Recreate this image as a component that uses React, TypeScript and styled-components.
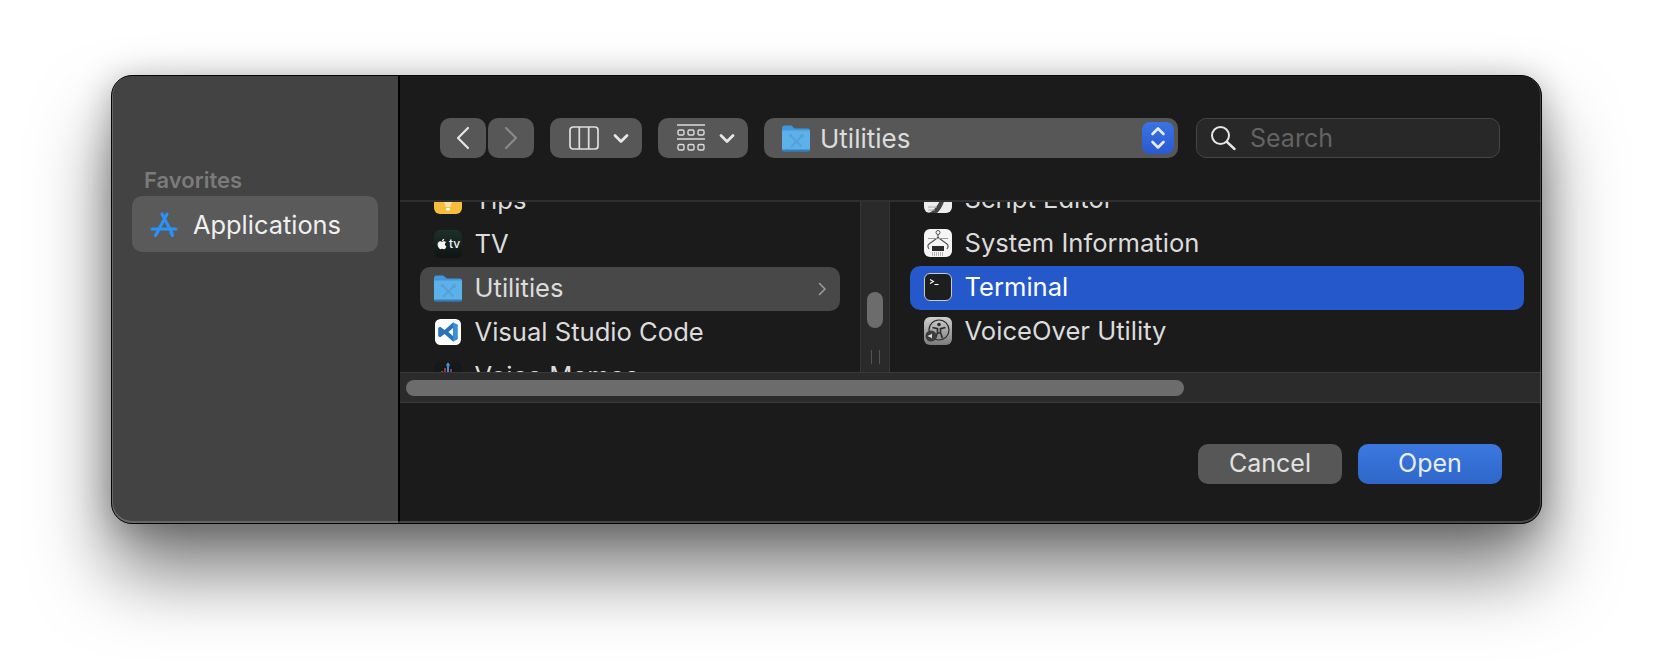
import React from 'react';
import styled, { createGlobalStyle } from 'styled-components';
import { FaApple } from 'react-icons/fa';

const Global = createGlobalStyle`
  html, body { margin: 0; padding: 0; background: #fff; }
  body { font-family: Inter, "Noto Sans", "Liberation Sans", sans-serif; -webkit-font-smoothing: antialiased; }
`;

const Page = styled.div`
  width: 1654px;
  height: 672px;
  overflow: hidden;
  box-sizing: border-box;
  padding: 75px 0 0 111px;
  background: #fff;
`;

const Dialog = styled.div`
  width: 1431px;
  height: 449px;
  box-sizing: border-box;
  border: 1px solid #050505;
  border-radius: 21px;
  display: flex;
  overflow: hidden;
  background: #1b1b1b;
  box-shadow: 0 48px 76px rgba(0, 0, 0, 0.52), 0 4px 34px rgba(0, 0, 0, 0.27);
  position: relative;
  &::after {
    content: '';
    position: absolute;
    inset: 0;
    border-radius: 20px;
    box-shadow: inset 0 -1px 0 1px rgba(255, 255, 255, 0.2);
    pointer-events: none;
  }
`;

const Sidebar = styled.aside`
  width: 286px;
  flex: none;
  box-sizing: border-box;
  background: #434343;
  padding: 91px 20px 0 20px;
`;

const SidebarTitle = styled.div`
  font-size: 22px;
  font-weight: 600;
  line-height: 26px;
  color: #7b7b7b;
  padding-left: 12px;
  margin-bottom: 3px;
`;

const SidebarItem = styled.div`
  height: 56px;
  border-radius: 10px;
  background: #5a5a5a;
  display: flex;
  align-items: center;
  gap: 15px;
  padding-left: 18px;
  font-size: 25.4px;
  color: #f0f0f0;
`;

const Main = styled.main`
  flex: 1;
  min-width: 0;
  display: flex;
  flex-direction: column;
  border-left: 2px solid #000;
`;

const Toolbar = styled.div`
  height: 126px;
  flex: none;
  box-sizing: border-box;
  display: flex;
  align-items: flex-start;
  padding: 42px 40px 0 40px;
  border-bottom: 2px solid #2f2f2f;
`;

const NavPair = styled.div`
  display: flex;
  gap: 2px;
  margin-right: 16px;
`;

const ToolButton = styled.div<{ $w: number }>`
  width: ${(p) => p.$w}px;
  height: 40px;
  flex: none;
  box-sizing: border-box;
  border-radius: 10px;
  background: #575757;
  display: flex;
  align-items: center;
  justify-content: center;
`;

const ViewButton = styled(ToolButton)`
  justify-content: flex-start;
  padding-left: 19px;
  margin-right: 16px;
  gap: 14px;
`;

const PathPopup = styled(ToolButton)`
  justify-content: flex-start;
  padding-left: 18px;
  gap: 10px;
  font-size: 26px;
  color: #dcdcdc;
  margin-right: 18px;
  position: relative;
`;

const Stepper = styled.div`
  position: absolute;
  right: 4px;
  top: 4px;
  width: 32px;
  height: 32px;
  border-radius: 8px;
  background: linear-gradient(#3a73e4, #2a5ad0);
  display: flex;
  align-items: center;
  justify-content: center;
`;

const SearchField = styled.div`
  width: 304px;
  height: 40px;
  box-sizing: border-box;
  border-radius: 10px;
  background: #282828;
  border: 1px solid #454545;
  display: flex;
  align-items: center;
  padding-left: 13px;
  gap: 14px;
  font-size: 25px;
  color: #636363;
`;

const Browser = styled.div`
  height: 170px;
  flex: none;
  display: flex;
  overflow: hidden;
`;

const Column = styled.div<{ $w: number; $padRight: number }>`
  ${(p) => (p.$w ? `width: ${p.$w}px; flex: none;` : 'flex: 1;')}
  box-sizing: border-box;
  padding: 0 ${(p) => p.$padRight}px 0 20px;
  overflow: hidden;
`;

const RowList = styled.div<{ $top: number }>`
  margin-top: ${(p) => p.$top}px;
`;

const Row = styled.div<{ $state?: 'dim' | 'active' }>`
  height: 44px;
  box-sizing: border-box;
  padding: 0 0 3px 14px;
  border-radius: 10px;
  display: flex;
  align-items: center;
  gap: 12.5px;
  font-size: 25.6px;
  color: ${(p) => (p.$state === 'active' ? '#fff' : '#dcdcdc')};
  background: ${(p) => (p.$state === 'active' ? '#2559cb' : p.$state === 'dim' ? '#484848' : 'transparent')};
  position: relative;
`;

const RowChevron = styled.svg`
  position: absolute;
  right: 13px;
  top: 15px;
`;

const Resizer = styled.div`
  width: 30px;
  flex: none;
  box-sizing: border-box;
  background: #2a2a2a;
  border-left: 1px solid #363636;
  border-right: 1px solid #363636;
  display: flex;
  flex-direction: column;
  align-items: center;
  padding-top: 90px;
`;

const ResizerThumb = styled.div`
  width: 16px;
  height: 36px;
  border-radius: 8px;
  background: #6c6c6c;
`;

const Grip = styled.div`
  width: 9px;
  height: 14px;
  margin-top: 22px;
  box-sizing: border-box;
  border-left: 1px solid #555;
  border-right: 1px solid #555;
`;

const HScroll = styled.div`
  height: 31px;
  flex: none;
  box-sizing: border-box;
  background: #2b2b2b;
  border-top: 1px solid #3a3a3a;
  border-bottom: 1px solid #3a3a3a;
  padding: 7px 6px;
`;

const HThumb = styled.div`
  width: 778px;
  height: 16px;
  border-radius: 8px;
  background: #6c6c6c;
`;

const Footer = styled.div`
  flex: 1;
  display: flex;
  justify-content: flex-end;
  gap: 16px;
  padding: 41px 39px 0 0;
`;

const DialogButton = styled.div<{ $primary?: boolean }>`
  width: 144px;
  height: 40px;
  box-sizing: border-box;
  padding-bottom: 2px;
  border-radius: 10px;
  display: flex;
  align-items: center;
  justify-content: center;
  font-size: 25px;
  color: ${(p) => (p.$primary ? '#e8eefb' : '#e2e2e2')};
  background: ${(p) => (p.$primary ? 'linear-gradient(#3b78e0, #2f66c9)' : '#575757')};
`;

const AppIcon = styled.svg`
  width: 28px;
  height: 28px;
  flex: none;
  display: block;
`;

const TvBadge = styled.div`
  width: 28px;
  height: 28px;
  flex: none;
  box-sizing: border-box;
  border-radius: 6px;
  background: linear-gradient(#1d3029, #0f1414);
  color: #f4f4f4;
  display: flex;
  align-items: center;
  justify-content: center;
  gap: 1px;
  font-size: 12px;
  font-weight: 500;
`;

const AppStoreGlyph = () => (
  <svg width="28" height="25" viewBox="0 0 28 25" fill="none" stroke="#2a93fb" strokeWidth="3" strokeLinecap="round">
    <path d="M12 2l10 19M17 2L7 21M2 17h24" />
    <path d="M5.5 23.5l1.5-2.5M22.5 23.5L21 21" />
  </svg>
);

const ChevronLeft = () => (
  <svg width="14" height="24" viewBox="0 0 14 24" fill="none" stroke="#e6e6e6" strokeWidth="2.2" strokeLinecap="round" strokeLinejoin="round">
    <path d="M12 2L2 12l10 10" />
  </svg>
);

const ChevronRight = () => (
  <svg width="14" height="24" viewBox="0 0 14 24" fill="none" stroke="#8a8a8a" strokeWidth="2.2" strokeLinecap="round" strokeLinejoin="round">
    <path d="M2 2l10 10L2 22" />
  </svg>
);

const ChevronDown = () => (
  <svg width="16" height="11" viewBox="0 0 16 11" fill="none" stroke="#e6e6e6" strokeWidth="2.8" strokeLinecap="round" strokeLinejoin="round">
    <path d="M2 2.5L8 8.5l6-6" />
  </svg>
);

const ColumnsGlyph = () => (
  <svg width="30" height="24" viewBox="0 0 30 24" fill="none" stroke="#e0e0e0" strokeWidth="1.7">
    <rect x="1" y="1" width="28" height="22" rx="3" />
    <path d="M10.3 1v22M19.7 1v22" />
  </svg>
);

const GroupGlyph = () => (
  <svg width="28" height="28" viewBox="0 0 28 28" fill="none" stroke="#dcdcdc" strokeWidth="1.4">
    <path d="M0 1h28M0 15h28" strokeWidth="1.7" />
    {[0, 10, 20].map((x) => (
      <React.Fragment key={x}>
        <rect x={x + 1} y="6" width="6" height="5" rx="1.5" />
        <rect x={x + 1} y="20.5" width="6" height="5.5" rx="1.5" />
      </React.Fragment>
    ))}
  </svg>
);

const UpDown = () => (
  <svg width="16" height="24" viewBox="0 0 16 24" fill="none" stroke="#e8eefc" strokeWidth="2.6" strokeLinecap="round" strokeLinejoin="round">
    <path d="M2.5 8L8 2.5 13.5 8M2.5 16L8 21.5 13.5 16" />
  </svg>
);

const SearchGlyph = () => (
  <svg width="26" height="26" viewBox="0 0 26 26" fill="none" stroke="#e6e6e6" strokeWidth="2">
    <circle cx="10.5" cy="10.5" r="8.5" />
    <path d="M17 17l7.5 7" strokeWidth="2.4" strokeLinecap="round" />
  </svg>
);

const FolderGlyph = () => (
  <AppIcon viewBox="0 0 28 28">
    <path d="M0 4.5C0 2.5 1 1.5 2.5 1.5h6c1.2 0 1.8.6 2.6 1.5l1.4 1.5H26c1.2 0 2 .8 2 2V8H0z" fill="#3f97dd" />
    <path d="M0 6.5h28v19c0 1-.7 1.7-1.7 1.7H1.7C.7 27.2 0 26.5 0 25.5z" fill="#5db1ea" />
    <path d="M0 25.5h28v.4c0 .8-.7 1.3-1.7 1.3H1.7C.7 27.2 0 26.7 0 25.9z" fill="#2e7fc2" />
    <path d="M9.5 12.5l9.5 9.5M19 13L9.5 22.5" stroke="#57a0d8" strokeWidth="2" strokeLinecap="round" />
    <circle cx="20" cy="12" r="2" fill="#57a0d8" />
    <circle cx="8.5" cy="11.5" r="1.7" fill="#57a0d8" />
  </AppIcon>
);

const TipsIcon = () => (
  <AppIcon viewBox="0 0 28 28">
    <rect width="28" height="28" rx="6" fill="#f6bd3c" />
    <path d="M14 6a6 6 0 0 0-3.4 11l1 4h4.8l1-4A6 6 0 0 0 14 6z" fill="#f7e6a8" />
    <rect x="12" y="22" width="4" height="2.5" rx="1" fill="#fff" />
  </AppIcon>
);

const TvIcon = () => (
  <TvBadge>
    <FaApple size={12} />
    <span>tv</span>
  </TvBadge>
);

const VsCodeIcon = () => (
  <AppIcon viewBox="0 0 28 28">
    <rect x="1" y="1" width="26" height="26" rx="5.5" fill="#fff" />
    <path d="M19 4.5l4.5 2.2v14.6L19 23.5l-8.4-7.6-4.4 3.4-2-1.1v-8.4l2-1.1 4.4 3.4zm0 5.6l-4.6 3.9 4.6 3.9z" fill="#2a72bd" />
    <path d="M19 4.5l4.5 2.2v14.6L19 23.5z" fill="#3a8fdc" />
  </AppIcon>
);

const MemosIcon = () => (
  <AppIcon viewBox="0 0 28 28">
    <rect width="28" height="28" rx="6" fill="#17181a" />
    <path d="M8 9v8M11 6v11M17 7v10" stroke="#d9534a" strokeWidth="1.2" />
    <path d="M14 1v16" stroke="#3d8fe0" strokeWidth="2" />
    <circle cx="14" cy="3" r="1.8" fill="#3d8fe0" />
  </AppIcon>
);

const ScriptIcon = () => (
  <AppIcon viewBox="0 0 28 28">
    <rect width="28" height="28" rx="6" fill="#ededed" />
    <path d="M4 28C10 26 13 22 20 8l2 2C20 18 17 25 13 28z" fill="#444" />
    <path d="M4 22h9M4 25h7" stroke="#aaa" strokeWidth="1" />
  </AppIcon>
);

const SysInfoIcon = () => (
  <AppIcon viewBox="0 0 28 28">
    <rect width="28" height="28" rx="6" fill="#f5f5f5" />
    <circle cx="14" cy="3.5" r="2" fill="none" stroke="#555" strokeWidth="1" />
    <path d="M14 5.5v3M14 8.5L5 15c-1.4 1.2-1.4 3 0 5M14 8.5L23 15c1.4 1.2 1.4 3 0 5" fill="none" stroke="#555" strokeWidth="1.2" />
    <path d="M4 9.5h20" stroke="#999" strokeWidth="1" />
    <rect x="8" y="17" width="12" height="5" fill="#2a2a2a" />
    <path d="M8 24h12M8 26h12" stroke="#777" strokeWidth="1.2" strokeDasharray="1 1" />
  </AppIcon>
);

const TerminalIcon = () => (
  <AppIcon viewBox="0 0 28 28">
    <rect x="0.5" y="0.5" width="27" height="27" rx="5.5" fill="#1e1e1e" stroke="#c9c9c9" strokeWidth="1" />
    <path d="M6 6.5l3.5 2L6 10.5" fill="none" stroke="#fff" strokeWidth="1.1" />
    <path d="M10.5 11.5h4" stroke="#fff" strokeWidth="1.1" />
  </AppIcon>
);

const VoiceOverIcon = () => (
  <AppIcon viewBox="0 0 28 28">
    <defs>
      <linearGradient id="vo" x1="0" y1="0" x2="0" y2="1">
        <stop offset="0" stopColor="#cfcfcf" />
        <stop offset="1" stopColor="#7c7c7c" />
      </linearGradient>
    </defs>
    <rect width="28" height="28" rx="6" fill="url(#vo)" />
    <circle cx="15" cy="13" r="10" fill="none" stroke="#2c2c2c" strokeWidth="1.2" />
    <circle cx="15" cy="7.5" r="1.8" fill="#2c2c2c" />
    <path d="M8.5 10.5l5 1.2v4l-2 5.5M21.5 10.5l-5 1.2v4l2 5.5M13.5 16h3" fill="none" stroke="#2c2c2c" strokeWidth="1.6" />
    <circle cx="7" cy="19" r="5.5" fill="#3c3c3c" />
    <path d="M4.5 18h1.5l2-1.6v5.2L6 20H4.5z" fill="#ddd" />
  </AppIcon>
);

const App: React.FC = () => {
  return (
    <>
      <Global />
      <Page>
        <Dialog>
          <Sidebar>
            <SidebarTitle>Favorites</SidebarTitle>
            <SidebarItem>
              <AppStoreGlyph />
              Applications
            </SidebarItem>
          </Sidebar>
          <Main>
            <Toolbar>
              <NavPair>
                <ToolButton $w={46}><ChevronLeft /></ToolButton>
                <ToolButton $w={46}><ChevronRight /></ToolButton>
              </NavPair>
              <ViewButton $w={92}><ColumnsGlyph /><ChevronDown /></ViewButton>
              <ViewButton $w={90}><GroupGlyph /><ChevronDown /></ViewButton>
              <PathPopup $w={414}>
                <FolderGlyph />
                Utilities
                <Stepper><UpDown /></Stepper>
              </PathPopup>
              <SearchField>
                <SearchGlyph />
                Search
              </SearchField>
            </Toolbar>
            <Browser>
              <Column $w={460} $padRight={20}>
                <RowList $top={-23}>
                  <Row><TipsIcon />Tips</Row>
                  <Row><TvIcon />TV</Row>
                  <Row $state="dim">
                    <FolderGlyph />
                    Utilities
                    <RowChevron width="9" height="14" viewBox="0 0 9 14" fill="none" stroke="#9a9a9a" strokeWidth="1.6" strokeLinecap="round" strokeLinejoin="round">
                      <path d="M1.5 1.5L7 7l-5.5 5.5" />
                    </RowChevron>
                  </Row>
                  <Row><VsCodeIcon />Visual Studio Code</Row>
                  <Row><MemosIcon />Voice Memos</Row>
                </RowList>
              </Column>
              <Resizer>
                <ResizerThumb />
                <Grip />
              </Resizer>
              <Column $w={0} $padRight={17}>
                <RowList $top={-24}>
                  <Row><ScriptIcon />Script Editor</Row>
                  <Row><SysInfoIcon />System Information</Row>
                  <Row $state="active"><TerminalIcon />Terminal</Row>
                  <Row><VoiceOverIcon />VoiceOver Utility</Row>
                </RowList>
              </Column>
            </Browser>
            <HScroll><HThumb /></HScroll>
            <Footer>
              <DialogButton>Cancel</DialogButton>
              <DialogButton $primary>Open</DialogButton>
            </Footer>
          </Main>
        </Dialog>
      </Page>
    </>
  );
};

export default App;
